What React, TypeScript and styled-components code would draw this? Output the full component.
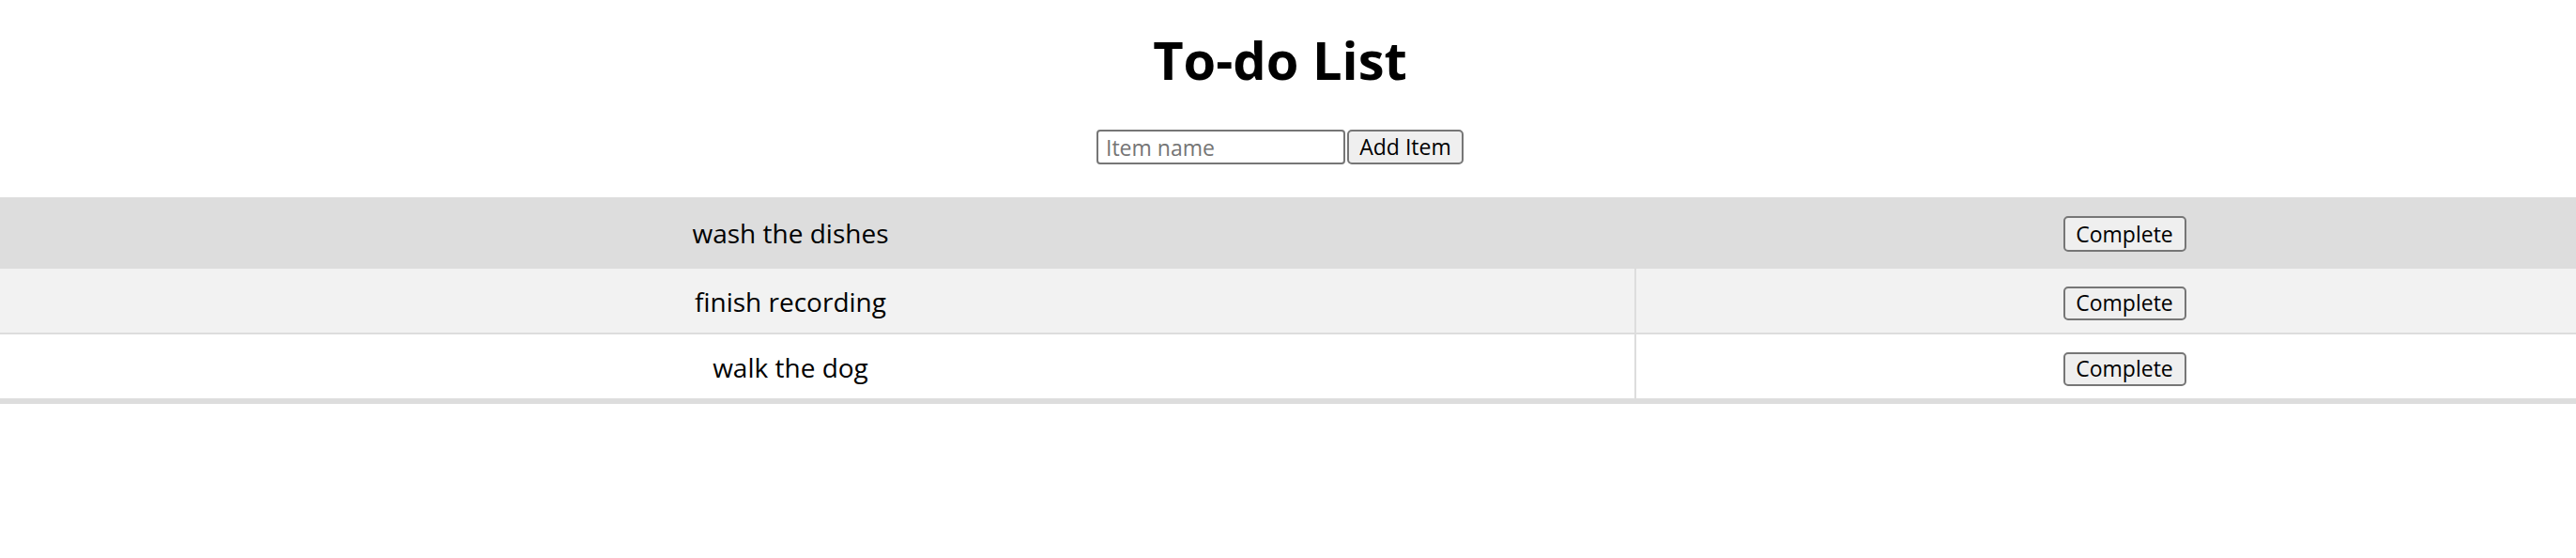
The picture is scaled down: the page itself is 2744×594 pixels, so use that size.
import styled, { createGlobalStyle } from 'styled-components'

const GlobalStyle = createGlobalStyle`
  html, body {
    margin: 0;
    padding: 0;
    background: #fff;
    overflow-x: hidden;
  }
  body {
    font-family: 'Open Sans', 'Noto Sans', sans-serif;
    color: #000;
  }
`

const Page = styled.div`
  box-sizing: border-box;
  width: 100%;
  padding-right: 17px; /* room the scrollbar takes in the original */
  display: flex;
  flex-direction: column;
  align-items: center;
`

const Title = styled.h1`
  margin: 25px 0 37px;
  font-size: 56px;
  font-weight: 700;
  line-height: 76px;
`

const AddForm = styled.form`
  display: flex;
  align-items: stretch;
  gap: 2px;
  margin: 0 0 35px;
`

const NameInput = styled.input`
  box-sizing: border-box;
  width: 265px;
  height: 37px;
  padding: 0 8px;
  border: 2px solid #767676;
  border-radius: 4px;
  font-family: inherit;
  font-size: 23px;
  color: #000;
  outline: none;

  &::placeholder {
    color: #757575;
  }
`

const PlainButton = styled.button<{ $width?: number }>`
  box-sizing: border-box;
  width: ${(p) => (p.$width ? `${p.$width}px` : 'auto')};
  height: 37px;
  padding: 0 8px;
  border: 2px solid #767676;
  border-radius: 5px;
  background: #efefef;
  font-family: inherit;
  font-size: 23px;
  line-height: 1;
  white-space: nowrap;
  color: #000;
  cursor: pointer;
`

const ItemTable = styled.table`
  flex-shrink: 0;
  width: 2840px;
  border-collapse: separate;
  border-spacing: 0;
  table-layout: fixed;
`

const ItemRow = styled.tr<{ $bg: string }>`
  background: ${(p) => p.$bg};
`

const Cell = styled.td<{ $height: number; $border: number }>`
  box-sizing: border-box;
  height: ${(p) => p.$height}px;
  padding: 2px 0 0;
  text-align: center;
  vertical-align: middle;
  font-size: 28px;
  border-bottom: ${(p) => p.$border}px solid #ddd;

  & + & {
    border-left: 2px solid #ddd;
  }
`

const items = ['wash the dishes', 'finish recording', 'walk the dog']
const rowColors = ['#dddddd', '#f2f2f2', '#ffffff']

export default function App() {
  return (
    <>
      <GlobalStyle />
      <Page>
        <Title>To-do List</Title>
        <AddForm onSubmit={(e) => e.preventDefault()}>
          <NameInput placeholder='Item name' />
          <PlainButton type='submit' $width={124}>
            Add Item
          </PlainButton>
        </AddForm>
        <ItemTable>
          <colgroup>
            <col style={{ width: 1797 }} />
            <col />
          </colgroup>
          <tbody>
            {items.map((item, i) => {
              const first = i === 0
              const last = i === items.length - 1
              const height = first ? 76 : last ? 74 : 70
              const border = last ? 6 : 2
              return (
                <ItemRow key={item} $bg={rowColors[i]}>
                  <Cell $height={height} $border={border}>
                    {item}
                  </Cell>
                  <Cell $height={height} $border={border}>
                    <PlainButton type='button' $width={131} style={{ height: first ? 38 : 36 }}>
                      Complete
                    </PlainButton>
                  </Cell>
                </ItemRow>
              )
            })}
          </tbody>
        </ItemTable>
      </Page>
    </>
  )
}
